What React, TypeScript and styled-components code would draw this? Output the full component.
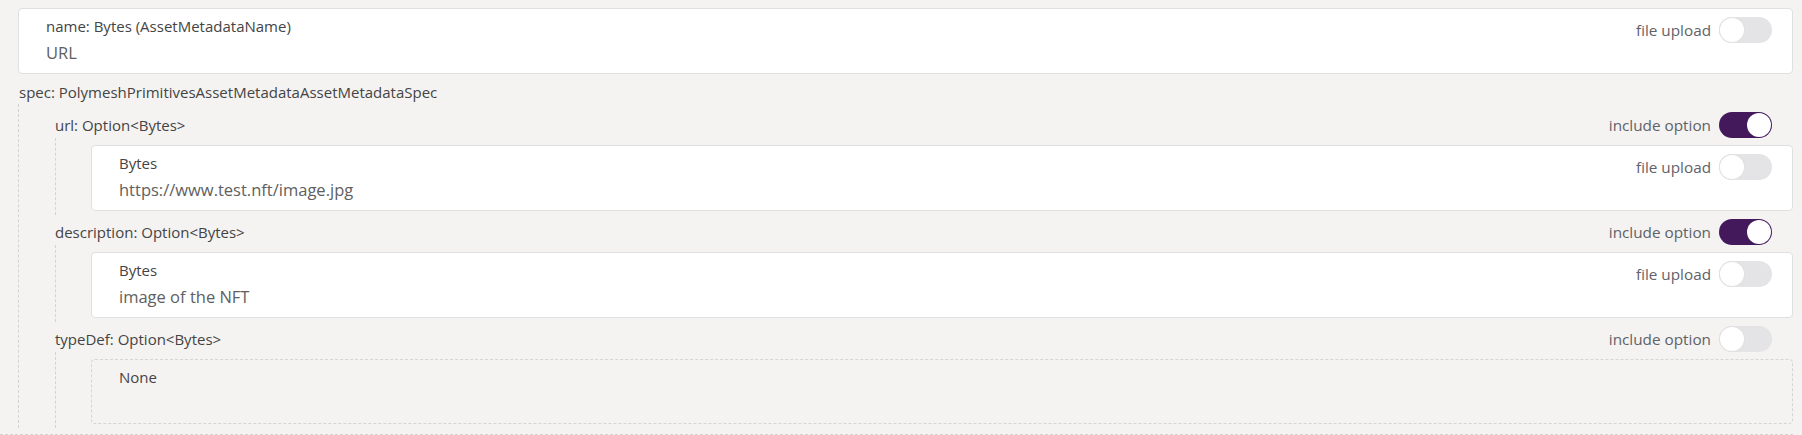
import React from 'react';
import styled, { createGlobalStyle } from 'styled-components';

const Global = createGlobalStyle`
  html, body {
    margin: 0;
    padding: 0;
    background: #f4f3f2;
  }
  body {
    font-family: "Open Sans", "Noto Sans", "Liberation Sans", sans-serif;
  }
`;

const Page = styled.div`
  box-sizing: border-box;
  width: 1802px;
  padding-top: 8px;
`;

const Section = styled.div`
  margin-right: 9px;
  padding: 0 0 6px 18px;
  border-bottom: 1px dashed #d3d3d3;
`;

const Card = styled.div<{ $empty?: boolean }>`
  display: flex;
  justify-content: space-between;
  align-items: flex-start;
  box-sizing: border-box;
  height: ${(p) => (p.$empty ? '65px' : '66px')};
  padding: 8px 20px 0 27px;
  border: 1px ${(p) => (p.$empty ? 'dashed #d5d5d5' : 'solid #e0e0e0')};
  border-radius: 4px;
  background: ${(p) => (p.$empty ? 'transparent' : '#ffffff')};
`;

const FieldText = styled.div`
  display: flex;
  flex-direction: column;
`;

const Label = styled.div`
  font-size: 15px;
  line-height: 19px;
  color: #444444;
  white-space: nowrap;
`;

const Value = styled.div`
  margin-top: 6px;
  font-size: 16.5px;
  line-height: 22px;
  color: #606060;
  white-space: nowrap;
`;

const Control = styled.div`
  display: flex;
  align-items: center;
  gap: 8px;
`;

const ControlText = styled.span`
  font-size: 15.3px;
  line-height: 20px;
  color: #5f6268;
  white-space: nowrap;
`;

const Track = styled.div<{ $on?: boolean }>`
  position: relative;
  box-sizing: border-box;
  width: 53px;
  height: 26px;
  border-radius: 13px;
  background: ${(p) => (p.$on ? '#43195b' : '#e4e4e6')};
`;

const Knob = styled.div<{ $on?: boolean }>`
  position: absolute;
  top: 1px;
  left: ${(p) => (p.$on ? '28px' : '1px')};
  box-sizing: border-box;
  width: 24px;
  height: 24px;
  border-radius: 50%;
  background: #ffffff;
  box-shadow: ${(p) => (p.$on ? 'none' : '0 0 0 1px #e0e0e2')};
`;

const SpecLabel = styled(Label)`
  margin-top: 9px;
  padding-left: 1px;
`;

const Struct = styled.div`
  margin-top: 2px;
  padding: 8px 0 0 36px;
  border-left: 1px dashed #d3d3d3;
  display: flex;
  flex-direction: column;
  gap: 4px;
`;

const OptionRow = styled.div`
  display: flex;
  flex-direction: column;
`;

const OptionHead = styled.div`
  display: flex;
  justify-content: space-between;
  align-items: center;
  height: 26px;
  padding-right: 21px;
`;

const OptionBody = styled.div`
  padding: 7px 0 4px 35px;
  border-left: 1px dashed #d3d3d3;
`;

function Toggle({ on }: { on?: boolean }) {
  return (
    <Track $on={on}>
      <Knob $on={on} />
    </Track>
  );
}

function BytesCard({ label, value }: { label: string; value?: string }) {
  return (
    <Card>
      <FieldText>
        <Label>{label}</Label>
        <Value>{value}</Value>
      </FieldText>
      <Control>
        <ControlText>file upload</ControlText>
        <Toggle />
      </Control>
    </Card>
  );
}

function Option({
  label,
  on,
  children,
}: {
  label: string;
  on?: boolean;
  children: React.ReactNode;
}) {
  return (
    <OptionRow>
      <OptionHead>
        <Label>{label}</Label>
        <Control>
          <ControlText>include option</ControlText>
          <Toggle on={on} />
        </Control>
      </OptionHead>
      <OptionBody>{children}</OptionBody>
    </OptionRow>
  );
}

export default function App() {
  return (
    <>
      <Global />
      <Page>
        <Section>
          <BytesCard label="name: Bytes (AssetMetadataName)" value="URL" />
          <SpecLabel>spec: PolymeshPrimitivesAssetMetadataAssetMetadataSpec</SpecLabel>
          <Struct>
            <Option label="url: Option<Bytes>" on>
              <BytesCard label="Bytes" value="https://www.test.nft/image.jpg" />
            </Option>
            <Option label="description: Option<Bytes>" on>
              <BytesCard label="Bytes" value="image of the NFT" />
            </Option>
            <Option label="typeDef: Option<Bytes>">
              <Card $empty>
                <Label>None</Label>
              </Card>
            </Option>
          </Struct>
        </Section>
      </Page>
    </>
  );
}
